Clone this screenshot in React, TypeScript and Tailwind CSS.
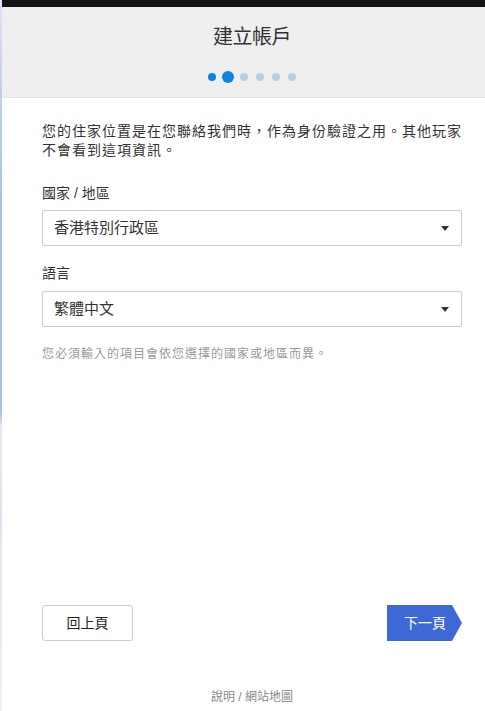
import React from 'react';

const FONT = '"Liberation Sans", "Noto Sans CJK TC", sans-serif';

// 단계 표시 점
const StepDots: React.FC<{ current: number; total: number }> = ({ current, total }) => {
  return (
    <div className="flex items-center justify-center">
      {Array.from({ length: total }).map((_, i) => (
        <div key={i} className="flex h-4 w-4 items-center justify-center">
          {i === current ? (
            <span className="block h-3 w-3 rounded-full bg-[#0b84e2]" />
          ) : i < current ? (
            <span className="block h-2 w-2 rounded-full bg-[#0b84e2]" />
          ) : (
            <span className="block h-2 w-2 rounded-full bg-[#b9cfe1]" />
          )}
        </div>
      ))}
    </div>
  );
};

const FakeSelect: React.FC<{ value: string }> = ({ value }) => {
  return (
    <div className="flex h-[36px] items-center justify-between rounded-[2px] border border-[#cccccc] bg-white pl-[11px] pr-[12px]">
      <span className="text-[15px] leading-[20px] text-[#333333]">{value}</span>
      <svg width="8" height="5" viewBox="0 0 8 5" className="mt-[1px]">
        <path d="M0 0 H8 L4 5 Z" fill="#333333" />
      </svg>
    </div>
  );
};

export default function App() {
  return (
    <div className="flex h-screen w-full" style={{ fontFamily: FONT }}>
      {/* left background strip */}
      <div className="w-[2px] shrink-0 bg-[linear-gradient(to_bottom,#dfe5f2_0%,#c2d0ec_12%,#abc0e7_28%,#abc0e7_58%,#e4e9f2_60%,#dde4ef_72%,#eef2f7_100%)]" />

      <div className="flex flex-1 flex-col bg-white">
        {/* top bar */}
        <div className="h-[7px] bg-[#131313]" />

        {/* header */}
        <div className="flex h-[91px] flex-col items-center border-b border-[#e2e2e2] bg-[#efefef] pl-[40px] pr-[23px]">
          <h1 className="mt-[18px] text-[20px] leading-[24px] tracking-[-0.5px] text-[#333333]">建立帳戶</h1>
          <div className="mt-[20px]">
            <StepDots current={1} total={6} />
          </div>
        </div>

        {/* main */}
        <main className="flex flex-1 flex-col pl-[40px] pr-[23px]">
          <p className="mt-[24px] text-[14px] leading-[19px] tracking-[1px] text-[#333333]">
            <span className="block whitespace-nowrap">您的住家位置是在您聯絡我們時，作為身份驗證之用。其他玩家</span>
            <span className="block whitespace-nowrap">不會看到這項資訊。</span>
          </p>

          <label className="mt-[23px] block text-[14px] leading-[20px] text-[#333333]">國家 / 地區</label>
          <div className="mt-[7px]">
            <FakeSelect value="香港特別行政區" />
          </div>

          <label className="mt-[17px] block text-[14px] leading-[20px] text-[#333333]">語言</label>
          <div className="mt-[8px]">
            <FakeSelect value="繁體中文" />
          </div>

          <p className="mt-[18px] text-[12px] leading-[18px] tracking-[1px] text-[#999999]">
            您必須輸入的項目會依您選擇的國家或地區而異。
          </p>

          <div className="mt-auto flex items-center justify-between">
            <button className="flex h-[36px] w-[91px] items-center justify-center rounded-[3px] border border-[#cccccc] bg-white text-[14px] text-[#222222]">
              回上頁
            </button>
            <button className="flex h-[36px] w-[75px] items-center justify-center bg-[#3f68d7] pl-[1px] text-[14px] text-white [clip-path:polygon(0_0,calc(100%-10px)_0,100%_50%,calc(100%-10px)_100%,0_100%)]">
              下一頁
            </button>
          </div>

          <footer className="mb-[6px] mt-[48px] text-center text-[12px] leading-[16px] text-[#888888]">
            說明 / 網站地圖
          </footer>
        </main>
      </div>
    </div>
  );
}
